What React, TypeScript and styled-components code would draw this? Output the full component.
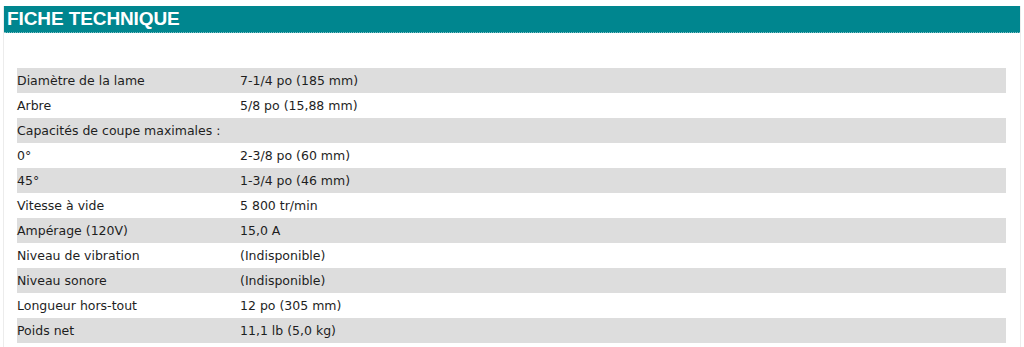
import { createGlobalStyle, styled } from "styled-components";

const GlobalStyle = createGlobalStyle`
  html, body {
    margin: 0;
    padding: 0;
    background: #ffffff;
  }
`;

const Page = styled.div`
  width: 1024px;
  height: 347px;
  padding: 6px 3px 0 3px;
  box-sizing: border-box;
  overflow: hidden;
`;

const Panel = styled.div`
  border-left: 1px solid #ececec;
  border-right: 1px solid #ececec;
  height: 100%;
`;

const Header = styled.h2`
  margin: 0;
  height: 26px;
  background: #00868f;
  border-bottom: 1px dotted #7fbfc4;
  color: #ffffff;
  font-family: "Liberation Sans", Arial, sans-serif;
  font-weight: bold;
  font-size: 19px;
  line-height: 26px;
  padding-left: 3px;
  letter-spacing: -0.1px;
`;

const Specs = styled.table`
  margin: 35px 0 0 13px;
  width: 989px;
  border-collapse: collapse;
  font-family: "DejaVu Sans", Verdana, sans-serif;
  font-size: 12.5px;
  color: #1e1e1e;
`;

const Row = styled.tr<{ $shaded: boolean }>`
  height: 25px;
  background: ${(p) => (p.$shaded ? "#dddddd" : "#ffffff")};
`;

const Label = styled.td`
  width: 223px;
  padding: 0;
  vertical-align: middle;
`;

const Value = styled.td`
  padding: 0;
  vertical-align: middle;
`;

const specs: [string, string][] = [
  ["Diamètre de la lame", "7-1/4 po (185 mm)"],
  ["Arbre", "5/8 po (15,88 mm)"],
  ["Capacités de coupe maximales :", ""],
  ["0°", "2-3/8 po (60 mm)"],
  ["45°", "1-3/4 po (46 mm)"],
  ["Vitesse à vide", "5 800 tr/min"],
  ["Ampérage (120V)", "15,0 A"],
  ["Niveau de vibration", "(Indisponible)"],
  ["Niveau sonore", "(Indisponible)"],
  ["Longueur hors-tout", "12 po (305 mm)"],
  ["Poids net", "11,1 lb (5,0 kg)"],
];

export default function App() {
  return (
    <>
      <GlobalStyle />
      <Page>
        <Panel>
          <Header>FICHE TECHNIQUE</Header>
          <Specs>
            <tbody>
              {specs.map(([label, value], i) => (
                <Row key={label} $shaded={i % 2 === 0}>
                  <Label>{label}</Label>
                  <Value>{value}</Value>
                </Row>
              ))}
            </tbody>
          </Specs>
        </Panel>
      </Page>
    </>
  );
}
